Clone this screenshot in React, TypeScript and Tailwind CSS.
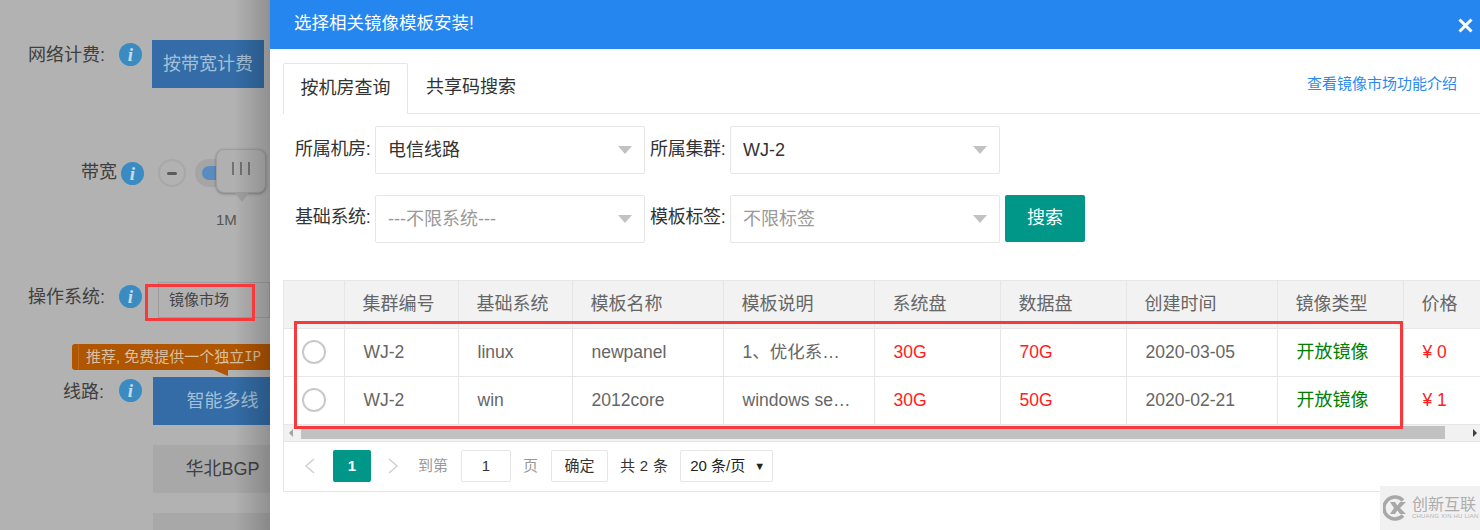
import React from "react";

function Info({ className = "" }: { className?: string }) {
  return (
    <span className={`flex h-[23px] w-[23px] shrink-0 items-center justify-center rounded-full bg-[#3a8bc2] font-['Liberation_Serif',serif] text-[19px] font-bold italic leading-none text-[#c8dbe6] ${className}`}>
      i
    </span>
  );
}

function Select({ value, muted = false }: { value: string; muted?: boolean }) {
  return (
    <div className="flex h-[48px] w-[270px] shrink-0 items-center justify-between rounded-[2px] border border-[#e6e6e6] bg-white pl-[12px] pr-[12px]">
      <span className={`text-[18px] ${muted ? "text-[#999999]" : "text-[#333333]"}`}>{value}</span>
      <span className="h-0 w-0 border-x-[7px] border-t-[8px] border-x-transparent border-t-[#c2c2c2]" />
    </div>
  );
}

const colClasses = ["w-[60px]", "w-[114px]", "w-[114px]", "w-[151px]", "w-[151px]", "w-[126px]", "w-[126px]", "w-[151px]", "w-[126px]", "w-[77px]"];
const heads = ["", "集群编号", "基础系统", "模板名称", "模板说明", "系统盘", "数据盘", "创建时间", "镜像类型", "价格"];
const rows = [
  ["WJ-2", "linux", "newpanel", "1、优化系…", "30G", "70G", "2020-03-05", "开放镜像", "¥ 0"],
  ["WJ-2", "win", "2012core", "windows se…", "30G", "50G", "2020-02-21", "开放镜像", "¥ 1"],
];

function Table() {
  return (
    <table className="w-[1196px] table-fixed border-collapse text-[17.5px] text-[#666666]">
      <colgroup>
        {colClasses.map((w, i) => (
          <col key={i} className={w} />
        ))}
      </colgroup>
      <thead>
        <tr className="h-[47px] bg-[#f2f2f2]">
          {heads.map((h, i) => (
            <th key={i} className="border-r border-b border-[#e6e6e6] pl-[18px] text-left text-[18px] font-normal last:border-r-0">{h}</th>
          ))}
        </tr>
      </thead>
      <tbody>
        {rows.map((r, ri) => (
          <tr key={ri} className="h-[48px]">
            <td className="border-r border-b border-[#e6e6e6] pl-[18px]">
              <span className="block h-[24px] w-[24px] rounded-full border-2 border-[#c9c9c9]" />
            </td>
            {r.map((c, i) => {
              const color = i === 4 || i === 5 || i === 8 ? "text-[#ff2020]" : i === 7 ? "text-[#008000]" : "";
              const size = i === 7 ? "text-[18px]" : "";
              return (
                <td key={i} className={`overflow-hidden whitespace-nowrap border-r border-b border-[#e6e6e6] pl-[19px] last:border-r-0 ${color} ${size}`}>{c}</td>
              );
            })}
          </tr>
        ))}
      </tbody>
    </table>
  );
}

function Scrollbar() {
  return (
    <div className="flex h-[17px] items-center border-b border-[#e6e6e6] bg-[#f1f1f1]">
      <span className="ml-[5px] h-0 w-0 border-y-[4px] border-r-[4px] border-y-transparent border-r-[#a3a3a3]" />
      <span className="ml-[8px] mt-[-1px] h-[13px] w-[1144px] bg-[#c1c1c1]" />
      <span className="ml-[28px] h-0 w-0 border-y-[4px] border-l-[4px] border-y-transparent border-l-[#404040]" />
    </div>
  );
}

function Pager() {
  return (
    <div className="flex h-[50px] items-center border-b border-[#e6e6e6] pl-[19px] text-[15px] text-[#333333]">
      <svg width="14" height="16" viewBox="0 0 14 16" fill="none" stroke="#d2d2d2" strokeWidth="1.6"><path d="M11 1 3 8l8 7" /></svg>
      <span className="ml-[16px] flex h-[32px] w-[38px] items-center justify-center rounded-[2px] bg-[#009688] font-bold text-white">1</span>
      <svg className="ml-[15px]" width="14" height="16" viewBox="0 0 14 16" fill="none" stroke="#d2d2d2" strokeWidth="1.6"><path d="m3 1 8 7-8 7" /></svg>
      <span className="ml-[18px] text-[#999999]">到第</span>
      <span className="ml-[13px] flex h-[32px] w-[50px] items-center justify-center rounded-[2px] border border-[#e6e6e6] text-[#333333]">1</span>
      <span className="ml-[12px] text-[#999999]">页</span>
      <span className="ml-[13px] flex h-[32px] w-[57px] items-center justify-center rounded-[2px] border border-[#e6e6e6]">确定</span>
      <span className="ml-[12px] tracking-[0.3px]">共 2 条</span>
      <span className="ml-[12px] flex h-[32px] w-[93px] items-center justify-between rounded-[2px] border border-[#e6e6e6] pl-[9px] pr-[7px] text-[#222222]">
        <span>20 条/页</span>
        <span className="text-[11px]">▼</span>
      </span>
    </div>
  );
}

function Watermark() {
  return (
    <div className="absolute bottom-0 right-0 flex h-[44px] w-[100px] items-center overflow-hidden bg-[#f1f1f1] pl-[3px]">
      <svg className="shrink-0" width="26" height="26" viewBox="0 0 26 26" fill="none">
        <path d="M20 5.5A11 11 0 1 0 20 20.5" stroke="#a8a8a8" strokeWidth="3.5" />
        <path d="M7 7h5l4 6-4 6H7l4-6zM14 11l3-4h6l-6 6 6 6h-6l-3-4z" fill="#a8a8a8" />
      </svg>
      <div className="ml-[3px] flex flex-col">
        <span className="whitespace-nowrap text-[16px] leading-[17px] text-[#adadad]">创新互联</span>
        <span className="whitespace-nowrap text-[6px] leading-[7px] tracking-[0.2px] text-[#b5b5b5]">CHUANG XIN HU LIAN</span>
      </div>
    </div>
  );
}

function LeftPanel() {
  return (
    <div className="relative h-[530px] w-[270px] shrink-0 overflow-hidden bg-[#b2b2b2] text-[18px] text-[#3f3f3f]">
      <div className="flex items-start pl-[28px] pt-[40px]">
        <span className="mt-[2px] w-[91px]">网络计费:</span>
        <Info className="mt-[3px]" />
        <span className="ml-[10px] flex h-[48px] w-[112px] items-center justify-center bg-[#336ca6] pt-[1px] text-[#a4c0d8]">按带宽计费</span>
      </div>
      <div className="relative mt-[71px] flex h-[28px] items-center pl-[81px]">
        <span className="mb-[1px] w-[40px]">带宽</span>
        <Info />
        <span className="ml-[14px] flex h-[28px] w-[28px] items-center justify-center rounded-full border-2 border-[#a8a8a8]">
          <span className="h-[3px] w-[10px] rounded-sm bg-[#5b5b5b]" />
        </span>
        <span className="ml-[9px] flex h-[28px] w-[60px] items-center rounded-l-full bg-[#a5a5a5] pl-[7px]">
          <span className="h-[14px] w-[30px] rounded-l-full bg-[#5a8cc0]" />
        </span>
        <span className="absolute left-[216px] top-[-10px] flex h-[44px] w-[50px] items-center justify-center gap-[6px] rounded-[8px] border border-[#9e9e9e] bg-[#b0b0b0] pb-[6px] shadow-[0_1px_3px_rgba(0,0,0,0.3)]">
          <span className="h-[13px] w-[2px] bg-[#727272]" />
          <span className="h-[13px] w-[2px] bg-[#727272]" />
          <span className="h-[13px] w-[2px] bg-[#727272]" />
        </span>
        <span className="absolute left-[235px] top-[34px] h-0 w-0 border-x-[7px] border-t-[9px] border-x-transparent border-t-[#a0a0a0]" />
      </div>
      <div className="mt-[23px] pl-[216px] text-[15px] leading-[20px] text-[#555555]">1M</div>
      <div className="mt-[52px] flex h-[36px] items-center pl-[28px]">
        <span className="mt-[-6px] w-[91px]">操作系统:</span>
        <Info className="mt-[-8px]" />
        <span className="ml-[16px] flex h-[36px] flex-1 items-center border border-[#9e9e9e] pl-[10px] text-[15px] text-[#444444]">镜像市场</span>
      </div>
      <div className="relative ml-[72px] mt-[26px] flex h-[26px] items-center whitespace-pre rounded-l-[3px] bg-[#b05500] pl-[14px] text-[15px] text-[#d8c0a0]">
        <span className="absolute bottom-0 left-[6px] top-0 w-px bg-[#bd6a1e]" />
        推荐, 免费提供一个独立<span className="font-['Liberation_Mono',monospace] text-[14px]">IP</span>
        <span className="absolute left-[142px] top-[26px] h-0 w-0 border-l-[14px] border-t-[6px] border-l-transparent border-t-[#b05500]" />
      </div>
      <div className="mt-[7px] flex w-[300px] items-start pl-[63px]">
        <span className="mt-[2px] w-[56px]">线路:</span>
        <Info className="mt-[2px]" />
        <span className="ml-[11px] flex h-[48px] w-[139px] items-center justify-center bg-[#336ca6] text-[#a4c0d8]">智能多线</span>
      </div>
      <div className="ml-[153px] mt-[20px] flex h-[48px] w-[139px] items-center justify-center bg-[#a8a8a8]">华北BGP</div>
      <div className="ml-[153px] mt-[20px] h-[48px] bg-[#a8a8a8]" />
      <div className="absolute inset-y-0 right-0 w-[36px] bg-gradient-to-r from-transparent to-[#00000030]" />
      <div className="absolute left-[145px] top-[284px] h-[37px] w-[110px] border-[3px] border-[#f5393c]" />
    </div>
  );
}

function Filters() {
  return (
    <div className="flex flex-col gap-[21px] pl-[25px] pt-[12px] text-[18px] text-[#333333]">
      <div className="flex items-center">
        <span className="w-[80px] whitespace-nowrap pb-[2px] tracking-[-0.3px]">所属机房:</span>
        <Select value="电信线路" />
        <span className="w-[85px] whitespace-nowrap pb-[2px] pl-[5px] tracking-[-0.3px]">所属集群:</span>
        <Select value="WJ-2" />
      </div>
      <div className="flex items-start">
        <span className="mt-[9px] w-[80px] whitespace-nowrap tracking-[-0.3px]">基础系统:</span>
        <Select value="---不限系统---" muted />
        <span className="mt-[9px] w-[85px] whitespace-nowrap pl-[5px] tracking-[-0.3px]">模板标签:</span>
        <Select value="不限标签" muted />
        <span className="ml-[5px] flex h-[47px] w-[80px] items-center justify-center rounded-[2px] bg-[#009688] text-white">搜索</span>
      </div>
    </div>
  );
}

export default function App() {
  return (
    <div className="flex h-[530px] w-[1480px] overflow-hidden bg-white font-['Liberation_Sans','Noto_Sans_CJK_SC',sans-serif]">
      <LeftPanel />
      <div className="relative min-w-0 flex-1">
        <header className="flex h-[49px] items-center bg-[#2486ee] pb-[2px] pl-[24px] text-[17.5px] text-white">
          <span>选择相关镜像模板安装!</span>
        </header>
        <svg className="absolute right-[7px] top-[18px]" width="15" height="15" viewBox="0 0 15 15" stroke="white" strokeWidth="3"><path d="M1.5 1.5l12 12M13.5 1.5l-12 12" /></svg>
        <div className="ml-[13px] mt-[14px] flex h-[51px] items-end border-b border-[#e6e6e6] text-[18px] text-[#333333]">
          <span className="mb-[-1px] flex h-[51px] w-[125px] items-center justify-center rounded-t-[2px] border border-b-0 border-[#e6e6e6] bg-white pb-[2px]">按机房查询</span>
          <span className="flex h-[50px] items-center pb-[2px] pl-[18px]">共享码搜索</span>
          <span className="ml-auto mr-[23px] flex h-[50px] items-start pt-[10px] text-[15px] text-[#2a8af0]">查看镜像市场功能介绍</span>
        </div>
        <Filters />
        <div className="ml-[13px] mt-[37px] border-l border-t border-[#e6e6e6]">
          <Table />
          <Scrollbar />
          <Pager />
        </div>
        <div className="absolute left-[24px] top-[321px] h-[108px] w-[1109px] border-[3px] border-[#f5393c]" />
        <Watermark />
      </div>
    </div>
  );
}
